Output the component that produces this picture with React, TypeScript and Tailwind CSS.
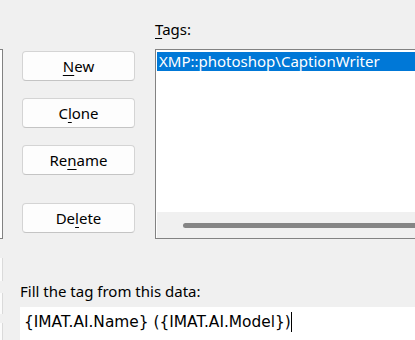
import React from 'react';

const font = { fontFamily: '"Noto Sans", "Open Sans", sans-serif' };

function Btn({ pre, u, post }: { pre: string; u: string; post: string }) {
  return (
    <button className="h-[30px] w-full rounded-[4px] border border-[#d4d4d4] border-b-[#c4c4c4] bg-[#fdfdfd] text-[15px] text-black leading-none">
      {pre}
      <span className="underline underline-offset-[3px]">{u}</span>
      {post}
    </button>
  );
}

export default function App() {
  return (
    <div className="w-[415px] h-[340px] overflow-hidden bg-[#f0f0f0] text-black" style={font}>
      <div className="flex h-[240px]">
        {/* edge of left list, mostly out of view */}
        <div className="w-[3px] shrink-0 mt-[49px] h-[190px] border-y border-r border-[#828282] bg-white" />

        <div className="ml-[19px] w-[113px] shrink-0 pt-[51px] flex flex-col">
          <Btn pre="" u="N" post="ew" />
          <div className="mt-[17px]">
            <Btn pre="C" u="l" post="one" />
          </div>
          <div className="mt-[17px]">
            <Btn pre="Re" u="n" post="ame" />
          </div>
          <div className="mt-[28px]">
            <Btn pre="De" u="l" post="ete" />
          </div>
        </div>

        <div className="ml-[20px] flex-1 min-w-0 flex flex-col">
          <div className="pt-[19px] h-[49px] text-[15px] leading-[20px]">
            <span className="underline underline-offset-[3px]">T</span>ags:
          </div>
          <div className="w-[300px] h-[190px] border border-[#828282] bg-white flex flex-col">
            <div className="flex-1 pt-[2px] pl-[1px]">
              <div className="h-[19px] bg-[#0078d7] text-white text-[15px] leading-[19px] pl-[2px] whitespace-nowrap">
                XMP::photoshop\CaptionWriter
              </div>
            </div>
            <div className="h-[26px] bg-[#f0f0f0] ml-[1px] flex items-center pl-[26px]">
              <div className="h-[5px] flex-1 rounded-full bg-[#858585]" />
            </div>
          </div>
        </div>
      </div>

      <div className="flex h-[100px]">
        {/* edges of controls cut off on the left */}
        <div className="w-[3px] shrink-0 flex flex-col">
          <div className="mt-[18px] h-[27px] border-r border-[#dadada] bg-[#fbfbfb]" />
          <div className="mt-[12px] h-[26px] border-r border-[#dadada] bg-[#fbfbfb]" />
          <div className="mt-[9px] h-[20px] border-r border-[#dadada] bg-[#fbfbfb]" />
        </div>
        <div className="ml-[17px] flex-1 flex flex-col">
          <div className="mt-[41px] text-[15px] leading-[20px] whitespace-nowrap">Fill the tag from this data:</div>
          <div
            className="mt-[6px] h-[40px] bg-white pl-[4px] pt-[4px] text-[15.4px] leading-[22px] whitespace-nowrap flex"
            style={{ fontFamily: '"DejaVu Sans", Verdana, sans-serif' }}
          >
            <span>{'{IMAT.AI.Name} ({IMAT.AI.Model})'}</span>
            <span className="w-px h-[20px] bg-black mt-[1px]" />
          </div>
        </div>
      </div>
    </div>
  );
}
